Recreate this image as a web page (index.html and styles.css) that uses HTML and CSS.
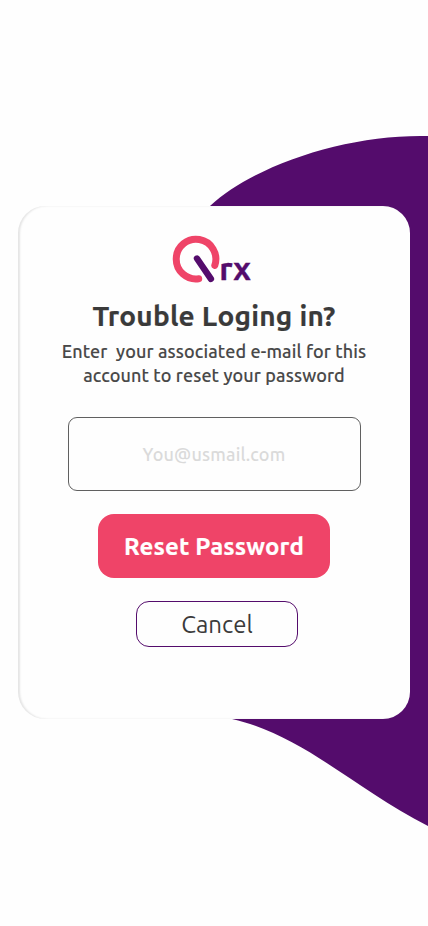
FILE: index.html
```html
<!DOCTYPE html>
<html lang="en">
<head>
<meta charset="utf-8">
<title>Reset password</title>
<link rel="stylesheet" href="styles.css">
</head>
<body>
<svg class="backdrop" viewBox="0 0 428 926" aria-hidden="true">
  <path d="M428 136C350 134 257 163 210 206L150 400L180 710L232 719C303 735 355 789 428 826Z"/>
</svg>
<main class="card">
  <svg class="logo" viewBox="0 0 80 50" role="img" aria-label="Qrx">
    <path class="ring" d="M26.7 42.7A19.8 19.8 0 1 1 42.8 29.4"/>
    <path class="tail" d="M25 22.5L38.9 42.9"/>
    <text class="mark" x="47.3" y="43.6" textLength="31.6" lengthAdjust="spacingAndGlyphs">rx</text>
  </svg>
  <h1 class="title">Trouble Loging in?</h1>
  <p class="lead">Enter&nbsp; your associated e-mail for this<br>account to reset your password</p>
  <input class="email" type="email" placeholder="You@usmail.com" aria-label="E-mail">
  <button class="reset" type="button">Reset Password</button>
  <button class="cancel" type="button">Cancel</button>
</main>
</body>
</html>
```
FILE: styles.css
```css
* { box-sizing: border-box; }
body {
  margin: 0;
  height: 926px;
  padding: 206px 18px 0;
  overflow: hidden;
  background: #fefefe;
  font-family: Ubuntu, "Noto Sans", sans-serif;
  color: #3a3a3a;
}
.backdrop { position: absolute; left: 0; top: 0; width: 428px; height: 926px; fill: #540c6c; }
.card {
  position: relative;
  width: 392px;
  height: 513px;
  padding-top: 30px;
  display: flex;
  flex-direction: column;
  align-items: center;
  background: #fefefe;
  border-radius: 27px;
  box-shadow: inset 2px 0 2px rgba(0, 0, 0, .1);
}
.logo { width: 80px; height: 50px; margin-right: 4px; overflow: visible; flex: none; }
.ring, .tail { fill: none; stroke-linecap: round; }
.ring { stroke: #ef4468; stroke-width: 7; }
.tail { stroke: #540c6c; stroke-width: 6.4; }
.mark { fill: #540c6c; stroke: #540c6c; stroke-width: .4px; font-size: 32px; font-weight: 700; }
.title { margin: 11.5px 0 0; font-size: 28px; line-height: 36px; font-weight: 700; letter-spacing: .22px; -webkit-text-stroke: .2px; white-space: nowrap; }
.lead { margin: 5.5px 0 0; font-size: 18px; line-height: 24px; font-weight: 500; letter-spacing: .12px; -webkit-text-stroke: .1px; text-align: center; white-space: nowrap; color: #484848; }
.email {
  width: 293px;
  height: 74px;
  margin-top: 30px;
  padding: 0;
  border: 1px solid #606060;
  border-radius: 9px;
  background: transparent;
  font: 500 18px Ubuntu, "Noto Sans", sans-serif;
  letter-spacing: .18px;
  text-align: center;
  flex: none;
}
.email::placeholder { color: #dadada; opacity: 1; }
.reset {
  width: 232px;
  height: 64px;
  margin-top: 23px;
  padding: 1px 0 0;
  border: 0;
  border-radius: 16px;
  background: #ef4468;
  color: #fff;
  font: 700 24px Ubuntu, "Noto Sans", sans-serif;
  letter-spacing: .15px;
  -webkit-text-stroke: .2px;
  white-space: nowrap;
}
.cancel {
  width: 162px;
  height: 46px;
  margin: 23px 0 0 6px;
  padding: 1px 0 0;
  border: 1px solid #540c6c;
  border-radius: 13px;
  background: transparent;
  color: #3a3a3a;
  font: 400 24px Ubuntu, "Noto Sans", sans-serif;
}
```
